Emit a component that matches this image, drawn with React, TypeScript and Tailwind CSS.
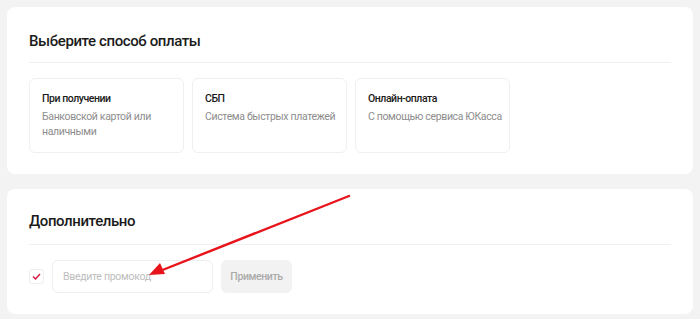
import React from 'react';

const methods = [
  { title: 'При получении', sub: 'Банковской картой или наличными' },
  { title: 'СБП', sub: 'Система быстрых платежей' },
  { title: 'Онлайн-оплата', sub: 'С помощью сервиса ЮКасса' },
];

const Arrow: React.FC = () => (
  <svg className="absolute left-0 top-0 pointer-events-none" width="700" height="319" viewBox="0 0 700 319">
    <line x1="349" y1="196" x2="160" y2="271" stroke="#e8141c" strokeWidth="2.4" strokeLinecap="round" />
    <polygon points="149,275 160,263 165,274" fill="#e8141c" />
  </svg>
);

export default function App() {
  return (
    <div className="relative w-[700px] h-[319px] bg-[#f3f3f3] px-[7px] pt-[7px] overflow-hidden" style={{ fontFamily: 'Roboto, "Noto Sans", sans-serif' }}>
      <div className="bg-white rounded-[8px] px-[22px] pt-[24px] pb-[21px]">
        <h2 className="text-[15px] leading-[20px] font-medium tracking-[-0.4px] text-[#1b1b1b]">Выберите способ оплаты</h2>
        <div className="h-px bg-[#f0f0f0] mt-[11px] mb-[15px]" />
        <div className="flex gap-[8px]">
          {methods.map((m) => (
            <div key={m.title} className="w-[155px] h-[75px] border border-[#efefef] rounded-[6px] pl-[12px] pr-[4px] pt-[12px]">
              <div className="text-[10.5px] leading-[16px] font-medium tracking-[-0.45px] text-[#1b1b1b]">{m.title}</div>
              <div className="text-[10.5px] leading-[15px] tracking-[-0.35px] text-[#8d8d8d] mt-[2px]">{m.sub}</div>
            </div>
          ))}
        </div>
      </div>

      <div className="bg-white rounded-[8px] px-[22px] pt-[22px] pb-[21px] mt-[15px]">
        <h2 className="text-[15px] leading-[20px] font-medium tracking-[-0.4px] text-[#1b1b1b]">Дополнительно</h2>
        <div className="h-px bg-[#f0f0f0] mt-[13px] mb-[15px]" />
        <div className="flex items-center">
          <div className="w-[15px] h-[15px] border border-[#eeeeee] rounded-[3px] flex items-center justify-center">
            <svg width="9" height="7" viewBox="0 0 9 7">
              <path d="M1 3.5 L3.5 6 L8 1" fill="none" stroke="#d6173f" strokeWidth="1.4" />
            </svg>
          </div>
          <input
            className="ml-[8px] w-[161px] h-[33px] border border-[#efefef] rounded-[6px] px-[10px] text-[10.5px] tracking-[-0.3px] text-[#1b1b1b] placeholder:text-[#bdbdbd] outline-none"
            placeholder="Введите промокод"
          />
          <button className="ml-[8px] w-[71px] h-[33px] rounded-[6px] bg-[#f2f2f2] text-[10.5px] font-medium tracking-[-0.4px] text-[#ababab]">
            Применить
          </button>
        </div>
      </div>
      <Arrow />
    </div>
  );
}
